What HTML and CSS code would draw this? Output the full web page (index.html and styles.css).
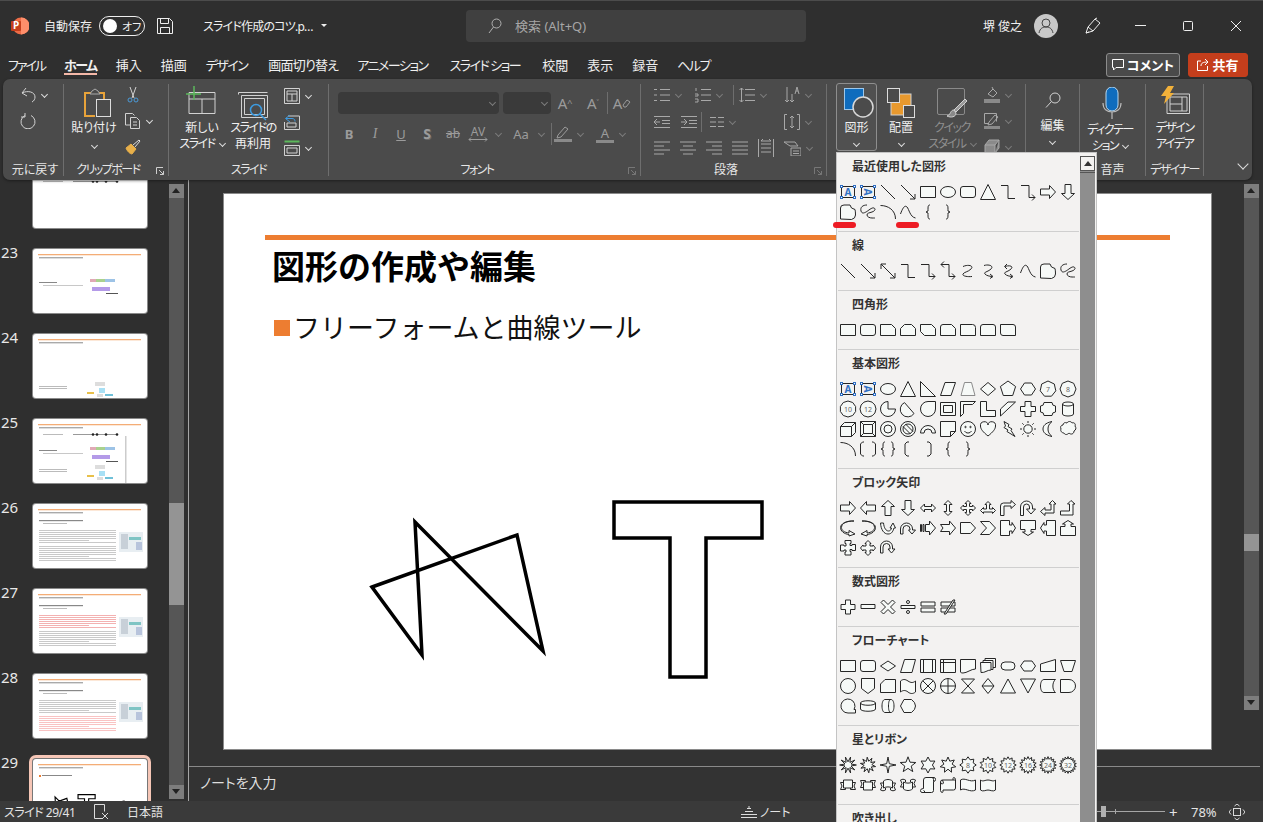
FILE: index.html
```html
<!DOCTYPE html>
<html lang="ja">

<head>
    <meta charset="UTF-8">
    <title>スライド作成のコツ.pptx - PowerPoint</title>
    <link rel="stylesheet" href="styles.css">
</head>

<body>
    <!-- title bar -->
    <header class="titlebar">
        <div class="title-left">
            <svg class="logo" width="18" height="18" viewBox="0 0 18 18"><circle cx="10" cy="9" r="8.5" fill="#ed6c47"/><path d="M10 .5a8.5 8.5 0 0 1 0 17z" fill="#ff8f6b"/><rect x="0" y="4" width="10" height="10" rx="1" fill="#c43e1c"/><text x="5" y="12" class="logo-p">P</text></svg>
            <span class="autosave">自動保存</span>
            <span class="toggle"><i class="knob"></i><b>オフ</b></span>
            <svg class="save" width="16" height="16" viewBox="0 0 16 16"><path d="M.5.5h12l3 3v12H.5zM3.500.5v5h8v-5M3.500 15.500v-6h9v6"/></svg>
            <span class="filename">スライド作成のコツ.p…</span>
            <i class="caret"></i>
        </div>
        <div class="searchbox">
            <svg width="14" height="16" viewBox="0 0 14 16"><circle cx="8.5" cy="5.5" r="4.5"/><path d="M5.500 9L1 15"/></svg>
            <span>検索 (Alt+Q)</span>
        </div>
        <span class="username">堺 俊之</span>
        <svg class="avatar" width="24" height="24" viewBox="0 0 24 24"><circle cx="12" cy="12" r="12" fill="#c8c8c8"/><circle cx="12" cy="9" r="4" fill="none" stroke="#444"/><path d="M5 19c1-5 4-6 7-6s6 1 7 6" fill="none" stroke="#444"/></svg>
        <svg class="penicon" width="18" height="18" viewBox="0 0 18 18"><path d="M2 16l2-6 7-8 5 4-7 8zM4 10l5 4M11 2l2-1M2 16l3-1"/></svg>
        <svg class="win-min" width="11" height="11" viewBox="0 0 11 11"><path d="M0 5.500h11"/></svg>
        <svg class="win-max" width="10" height="10" viewBox="0 0 10 10"><rect x=".5" y=".5" width="9" height="9" rx="1"/></svg>
        <svg class="win-close" width="10" height="10" viewBox="0 0 10 10"><path d="M0 0l10 10M10 0L0 10"/></svg>
    </header>

    <!-- tabs -->
    <nav class="tabs">
        <span class="k2">ファイル</span>
        <span class="active k">ホーム</span>
        <span>挿入</span>
        <span>描画</span>
        <span class="k">デザイン</span>
        <span class="mixed">画面切り替え</span>
        <span class="k">アニメーション</span>
        <span class="k wide">スライド ショー</span>
        <span class="wide">校閲</span>
        <span>表示</span>
        <span>録音</span>
        <span class="k">ヘルプ</span>
        <div class="tab-actions">
            <button class="btn-comment"><svg width="12" height="12" viewBox="0 0 12 12"><path d="M.5.5h11v8H4L1.500 11V8.500H.5z"/></svg>コメント</button>
            <button class="btn-share"><svg width="12" height="13" viewBox="0 0 12 13"><path d="M4 3H.5v9.500h10V8M4 8c0-3 2-4 7-4M8 1l3 3-3 3"/></svg>共有</button>
        </div>
    </nav>

    <!-- ribbon -->
    <section class="ribbon">
        <div class="group g-undo">
            <div class="group-body">
                <div class="col">
                    <div class="row"><svg class="ic" width="16" height="16" viewBox="0 0 16 16"><path d="M6 1L2 6l5 3M2 6c6-3 13-1 13 4 0 2-1 4-3 5"/></svg><i class="chev"></i></div>
                    <div class="row dim"><svg class="ic" width="16" height="16" viewBox="0 0 16 16"><path d="M5 2.500A7 7 0 1 0 11 2.500M5 0v4H1"/></svg></div>
                </div>
            </div>
            <div class="group-label">元に戻す</div>
        </div>

        <div class="group g-clip">
            <div class="group-body">
                <div class="big paste">
                    <div class="big-icon"><svg width="28" height="30" viewBox="0 0 28 30"><path d="M7 5H1v23h10M15 5h5v6" fill="none" stroke="#e8a33a" stroke-width="2"/><path d="M6 6l2-3 3-2 3 2 2 3z" fill="#4b4b4b" stroke="#aaa"/><rect x="12.500" y="11.500" width="14" height="17" fill="#4b4b4b" stroke="#ddd"/></svg></div>
                    <span>貼り付け</span>
                    <i class="chev"></i>
                </div>
                <div class="col">
                    <div class="row"><svg class="ic" width="16" height="16" viewBox="0 0 16 16"><path d="M5 0l4 11M11 0L7 11"/><circle cx="5" cy="13" r="2" stroke="#4a9ad8"/><circle cx="11" cy="13" r="2" stroke="#4a9ad8"/></svg></div>
                    <div class="row"><svg class="ic" width="16" height="16" viewBox="0 0 16 16"><path d="M5 12H.5V.5h7l2 2M5.500 4.500h6l3 3v8h-9zM8 9h4M8 12h4"/></svg><i class="chev"></i></div>
                    <div class="row"><svg class="ic" width="16" height="16" viewBox="0 0 16 16"><path d="M1 9l5-4 5 5-4 5C5 15 2 12 1 9z" fill="#e8b04a" stroke="#e8b04a"/><path d="M8 6l6-5 1 1-5 6" stroke="#ddd"/></svg></div>
                </div>
            </div>
            <div class="group-label"><span class="k">クリップボード</span><svg class="launcher" width="8" height="8" viewBox="0 0 8 8"><path d="M.5 7V.5H7M3 3l4.500 4.500M7.500 4v3.500H4"/></svg></div>
        </div>

        <div class="group g-slide">
            <div class="group-body">
                <div class="big newslide">
                    <div class="big-icon"><svg width="30" height="28" viewBox="0 0 30 28"><path d="M3 6.500h26v21H3zM3 13h26M16 13v14.500"/><path d="M8 0v14M0 8h15" stroke="#5cb85c" stroke-width="1.500"/></svg></div>
                    <span>新しい</span>
                    <span class="k">スライド<i class="chev inline"></i></span>
                </div>
                <div class="big reuse">
                    <div class="big-icon"><svg width="30" height="30" viewBox="0 0 30 30"><path d="M.5 1.500h29M.5 1.500v2M3.500 4.500h26v22h-26zM6.500 7.500h20v16h-20z"/><circle cx="18" cy="19" r="5.500" stroke="#3d9be0" stroke-width="1.500"/><path d="M22 23l6 6" stroke="#3d9be0" stroke-width="1.500"/></svg></div>
                    <span class="k">スライドの</span>
                    <span>再利用</span>
                </div>
                <div class="col slide-tools">
                    <div class="row"><svg class="ic" width="16" height="16" viewBox="0 0 16 16"><path d="M.5.5h15v15H.5zM3 3h10v3H3zM3 6v7h10V6M8 6v7"/></svg><i class="chev"></i></div>
                    <div class="row"><svg class="ic" width="16" height="16" viewBox="0 0 16 16"><path d="M4 2h11.500v13.500H.5V8M3 9h9v4H3z"/><path d="M6 1L1.500 4.500 6 8M2 4.500h6c2 0 3 1 3 3" stroke="#3d9be0"/></svg></div>
                    <div class="row"><svg class="ic" width="16" height="16" viewBox="0 0 16 16"><path d="M.5 1.500h15" stroke="#5cb85c" stroke-width="2"/><path d="M.5 5.500h15v10H.5zM3 8h10v5H3z"/></svg><i class="chev"></i></div>
                </div>
            </div>
            <div class="group-label"><span class="k">スライド</span></div>
        </div>

        <div class="group g-font">
            <div class="group-body stack">
                <div class="font-row1">
                    <div class="combo combo-font"><i class="chev dark"></i></div>
                    <div class="combo combo-size"><i class="chev dark"></i></div>
                    <span class="ftool grow">A<sup>^</sup></span>
                    <span class="ftool shrink">A<sup>˅</sup></span>
                    <i class="vsep"></i>
                    <span class="ftool clear">A<svg width="9" height="9" viewBox="0 0 9 9"><path d="M1 6l4-5 3 2-4 5H2z"/></svg></span>
                </div>
                <div class="font-row2">
                    <span class="ftool"><b>B</b></span>
                    <span class="ftool"><em>I</em></span>
                    <span class="ftool"><u>U</u></span>
                    <span class="ftool"><b class="shadow-s">S</b></span>
                    <span class="ftool"><s>ab</s></span>
                    <span class="ftool drop d43"><span class="spacing">AV<svg width="20" height="5" viewBox="0 0 20 5"><path d="M1 2.500h18M3 .5l-2 2 2 2M17 .5l2 2-2 2"/></svg></span><i class="chev dark"></i></span>
                    <span class="ftool drop d42"><span class="aa">Aa</span><i class="chev dark"></i></span>
                    <i class="vsep"></i>
                    <span class="ftool drop d42 pen"><svg width="18" height="16" viewBox="0 0 18 16"><path d="M4 9l7-8 3 2-7 8-4 1z"/><rect x="0" y="13" width="18" height="3" fill="#8a8a8a" stroke="none"/></svg><i class="chev dark"></i></span>
                    <span class="ftool drop d42 fontcolor"><span class="under">A</span><i class="chev dark"></i></span>
                </div>
            </div>
            <div class="group-label"><span class="k">フォント</span><svg class="launcher dim" width="8" height="8" viewBox="0 0 8 8"><path d="M.5 7V.5H7M3 3l4.500 4.500M7.500 4v3.500H4"/></svg></div>
        </div>

        <div class="group g-para">
            <div class="group-body stack para">
                <div class="para-row">
                    <span class="cell c41"><svg class="ic dimic" width="16" height="16" viewBox="0 0 16 16"><path d="M6 2.500h10M6 8h10M6 13.500h10M0 2.500h3M0 8h3M0 13.500h3" /></svg><i class="chev dark"></i></span>
                    <span class="cell c38"><svg class="ic dimic" width="16" height="16" viewBox="0 0 16 16"><path d="M6 2.500h10M6 8h10M6 13.500h10M1 1v3M0 7h3v2H0M0 12h3v3H0"/></svg><i class="chev dark"></i></span>
                    <i class="vsep tall"></i>
                    <span class="cell c38 ml5"><svg class="ic dimic" width="16" height="16" viewBox="0 0 16 16"><path d="M6 2.500h10M6 8h10M6 13.500h10M2.500 1v14M.5 3l2-2 2 2M.5 13l2 2 2-2"/></svg><i class="chev dark"></i></span>
                    <span class="cell end"><svg class="ic dimic" width="16" height="18" viewBox="0 0 16 18"><path d="M3 1v15M1 14l2 2 2-2M8 8v8M6 14l2 2 2-2M11 8l2-7 2 7M12 5h2"/></svg><i class="chev dark"></i></span>
                </div>
                <div class="para-row second">
                    <span class="cell c26"><svg class="ic dimic" width="16" height="12" viewBox="0 0 16 12"><path d="M0 .5h16M8 4.500h8M8 7.500h8M0 11.500h16M6 6H0M3 3L0 6l3 3"/></svg></span>
                    <span class="cell c21"><svg class="ic dimic" width="16" height="12" viewBox="0 0 16 12"><path d="M0 .5h16M8 4.500h8M8 7.500h8M0 11.500h16M0 6h6M3 3l3 3-3 3"/></svg></span>
                    <i class="vsep tall"></i>
                    <span class="cell c30 ml8"><svg class="ic dimic" width="14" height="10" viewBox="0 0 14 10"><path d="M0 .5h6M8 .5h6M0 5h6M8 5h6M0 9.500h6M8 9.500h6"/></svg><i class="chev dark"></i></span>
                    <span class="cell end"><svg class="ic dimic" width="16" height="16" viewBox="0 0 16 16"><path d="M3 .5H.5v15H3M13 .5h2.500v15H13M8 2v12M6 4l2-2 2 2M6 12l2 2 2-2"/></svg><i class="chev dark"></i></span>
                </div>
                <div class="para-row third">
                    <svg class="ic dimic al" width="16" height="14" viewBox="0 0 16 14"><path d="M0 1h16M0 5h10M0 9h16M0 13h10"/></svg>
                    <svg class="ic dimic al" width="16" height="14" viewBox="0 0 16 14"><path d="M0 1h16M3 5h10M0 9h16M3 13h10"/></svg>
                    <svg class="ic dimic al" width="16" height="14" viewBox="0 0 16 14"><path d="M0 1h16M6 5h10M0 9h16M6 13h10"/></svg>
                    <svg class="ic dimic al" width="16" height="14" viewBox="0 0 16 14"><path d="M0 1h16M0 5h16M0 9h16M0 13h16"/></svg>
                    <svg class="ic dimic al" width="16" height="18" viewBox="0 0 16 18"><path d="M.5 0v18M15.500 0v18M3 5h10M3 9h10M3 13h10M3 2h10M3 2l2-2M13 2l-2-2"/></svg>
                    <span class="cell end"><svg class="ic dimic" width="17" height="15" viewBox="0 0 17 15"><path d="M0 1h11l3 4H6zM7 7h10v8H7zM9 10h6M9 12.500h6"/></svg><i class="chev dark"></i></span>
                </div>
            </div>
            <div class="group-label">段落<svg class="launcher dim" width="8" height="8" viewBox="0 0 8 8"><path d="M.5 7V.5H7M3 3l4.500 4.500M7.500 4v3.500H4"/></svg></div>
        </div>

        <div class="group g-draw">
            <div class="group-body">
                <div class="big shapes-btn">
                    <div class="big-icon"><svg width="30" height="32" viewBox="0 0 30 32"><rect x=".5" y=".5" width="19" height="21" fill="#0f6cbd" stroke="#9cc7ea"/><circle cx="19" cy="19" r="10" fill="#4b4b4b" stroke="#d8d8d8" stroke-width="1.500"/></svg></div>
                    <span>図形</span>
                    <i class="chev"></i>
                </div>
                <div class="big arrange">
                    <div class="big-icon"><svg width="28" height="30" viewBox="0 0 28 30"><rect x="4" y="6" width="20" height="21" fill="#e8992e"/><rect x=".5" y=".5" width="12" height="14" fill="#4b4b4b" stroke="#ddd"/><rect x="16.500" y="17.500" width="11" height="12" fill="#4b4b4b" stroke="#ddd"/></svg></div>
                    <span>配置</span>
                    <i class="chev"></i>
                </div>
                <div class="big quick">
                    <div class="big-icon"><svg width="31" height="31" viewBox="0 0 31 31"><rect x=".5" y=".5" width="27" height="26" rx="1.500" fill="none" stroke="#8a8a8a"/><path d="M30 13L19 24l-2-2 11-11z" fill="#9a9a9a"/><path d="M17 22c-4 0-3 5-7 6 4 2 9 1 9-3z" fill="#8a8a8a"/></svg></div>
                    <span class="k">クイック</span>
                    <span class="k">スタイル<i class="chev inline dark"></i></span>
                </div>
                <div class="col draw-tools">
                    <div class="row"><svg class="ic dimic" width="16" height="16" viewBox="0 0 16 16"><path d="M4 7l5-5 4 4-4 4zM9 2L8 0"/><rect x="0" y="12" width="16" height="4" fill="#8a8a8a" stroke="none"/></svg><i class="chev dark"></i></div>
                    <div class="row"><svg class="ic dimic" width="16" height="16" viewBox="0 0 16 16"><path d="M.5.5h12v8M.5.5v10h4M5 9l6-7 3 2-6 7-4 1z"/><rect x="0" y="13" width="16" height="3" fill="#8a8a8a" stroke="none"/></svg><i class="chev dark"></i></div>
                    <div class="row"><svg class="ic dimic" width="16" height="16" viewBox="0 0 16 16"><path d="M1 6l4-5h10l-4 5zM1 6v8h10V6M11 14l4-5V1" fill="#8a8a8a"/></svg><i class="chev dark"></i></div>
                </div>
            </div>
        </div>

        <div class="group g-edit">
            <div class="group-body">
                <div class="big edit">
                    <div class="big-icon"><svg class="ic" width="16" height="16" viewBox="0 0 16 16"><circle cx="10" cy="6" r="5"/><path d="M6.500 9.500L1 15.500"/></svg></div>
                    <span>編集</span>
                    <i class="chev"></i>
                </div>
            </div>
        </div>

        <div class="group g-voice">
            <div class="group-body">
                <div class="big dictate">
                    <div class="big-icon"><svg width="20" height="32" viewBox="0 0 20 32"><rect x="4" y="0" width="12" height="24" rx="6" fill="#0f6cbd" stroke="#b8d8f0"/><path d="M1 16c0 6 4 9 9 9s9-3 9-9M10 25v7" fill="none" stroke="#bbb" stroke-width="1.200"/></svg></div>
                    <span class="k">ディクテー</span>
                    <span class="k">ション<i class="chev inline"></i></span>
                </div>
            </div>
            <div class="group-label">音声</div>
        </div>

        <div class="group g-design">
            <div class="group-body">
                <div class="big designer">
                    <div class="big-icon"><svg width="30" height="28" viewBox="0 0 30 28"><path d="M7 8h22.500v19.500H7zM10 11h17v14H10zM22 11v14M10 18h12"/><path d="M8 0h6l-4 7h4L4 18l2-8H1z" fill="#f2b13a" stroke="none"/></svg></div>
                    <span class="k">デザイン</span>
                    <span class="k">アイデア</span>
                </div>
            </div>
            <div class="group-label"><span class="k">デザイナー</span></div>
        </div>

        <div class="collapse"><i class="chev big-chev"></i></div>
    </section>

    <!-- workspace -->
    <main class="workspace">
        <aside class="slide-panel" id="slide-panel"></aside>
        <div class="scrollbar panel-scroll">
            <i class="sb-btn up"></i>
            <i class="sb-thumb"></i>
            <i class="sb-btn down"></i>
        </div>
        <div class="splitter"></div>
        <div class="editor">
            <div class="stage">
                <div class="slide">
                    <div class="slide-rule"></div>
                    <h1 class="slide-title">図形の作成や編集</h1>
                    <p class="slide-bullet"><i class="bullet"></i>フリーフォームと曲線ツール</p>
                    <svg class="slide-shapes" width="987" height="555" viewBox="0 0 987 555">
                        <path d="M148 393L293 341L319 457L191 328L198 461z"/>
                        <path d="M390 308H538V344H482V483H446V344H390z"/>
                    </svg>
                </div>
                <div class="scrollbar main-scroll">
                    <i class="sb-btn up"></i>
                    <i class="sb-thumb"></i>
                    <i class="sb-btn down"></i>
                </div>
            </div>
            <div class="notes">ノートを入力</div>
        </div>
    </main>

    <!-- status bar -->
    <footer class="statusbar">
        <div class="status-left">
            <span class="slide-count">スライド 29/41</span>
            <svg width="15" height="15" viewBox="0 0 15 15"><path d="M9 14.500H.5V.5h10v7M8 9l6 6M14 9l-6 6"/></svg>
            <span>日本語</span>
        </div>
        <div class="status-notes">
            <svg width="16" height="12" viewBox="0 0 16 12"><path d="M0 8.500h16M0 11.500h16M4 5.500h8M6 2.500h4M8 0v2"/></svg>
            <span>ノート</span>
        </div>
        <div class="status-zoom">
            <div class="zoom-slider"><i class="zoom-thumb"></i><i class="zoom-tick"></i></div>
            <span class="zoom-plus">+</span>
            <span class="zoom-val">78%</span>
            <svg width="16" height="16" viewBox="0 0 16 16"><rect x="4.500" y="4.500" width="7" height="7"/><path d="M5.500 2L8 0l2.500 2M5.500 14L8 16l2.500-2M2 5.500L0 8l2 2.500M14 5.500L16 8l-2 2.500"/></svg>
        </div>
    </footer>

    <!-- shapes dropdown -->
    <div class="shapes-menu">
        <div class="shapes-list" id="shapes-list"></div>
        <div class="menu-scroll">
            <i class="menu-up"></i>
            <i class="menu-thumb"></i>
        </div>
    </div>
    <i class="red-mark mark-a"></i>
    <i class="red-mark mark-b"></i>

    <script src="app.js"></script>
</body>

</html>
```

FILE: styles.css
```css
* {
    margin: 0;
    padding: 0;
    box-sizing: border-box;
}

html,
body {
    width: 1263px;
    height: 822px;
    overflow: hidden;
}

body {
    position: relative;
    background: #2f2f2f;
    color: #f0f0f0;
    font-family: "Noto Sans", "Noto Sans CJK JP", sans-serif;
    font-size: 12px;
    font-feature-settings: "palt";
    border-top: 1px solid #4c4c4c;
}

svg {
    flex: none;
    display: block;
}

i {
    display: block;
    font-style: normal;
}

/* katakana runs narrow in the ribbon */
.k {
    letter-spacing: -1.5px;
}

.k2 {
    letter-spacing: -2px;
}

/* title bar */
.titlebar {
    height: 49px;
    display: flex;
    align-items: center;
}

.title-left {
    width: 466px;
    display: flex;
    align-items: center;
    padding-left: 11px;
}

.logo-p {
    fill: #fff;
    font-size: 10px;
    font-weight: 700;
    text-anchor: middle;
}

.autosave {
    margin-left: 15px;
    width: 48px;
    white-space: nowrap;
}

.toggle {
    margin-left: 7px;
    width: 46px;
    height: 20px;
    border: 1px solid #eee;
    border-radius: 10px;
    display: flex;
    align-items: center;
    padding-left: 3px;
    font-size: 11px;
}

.toggle b {
    font-weight: 400;
    margin-left: 5px;
}

.knob {
    width: 14px;
    height: 14px;
    border-radius: 50%;
    background: #fff;
}

.save {
    margin-left: 12px;
    fill: none;
    stroke: #eee;
}

.filename {
    margin-left: 30px;
    width: 108px;
    white-space: nowrap;
    letter-spacing: -0.8px;
}

.caret {
    margin-left: 10px;
    border-left: 3px solid transparent;
    border-right: 3px solid transparent;
    border-top: 3px solid #eee;
}

.searchbox {
    width: 340px;
    height: 32px;
    background: #404040;
    border-radius: 4px;
    display: flex;
    align-items: center;
    padding-left: 22px;
    gap: 13px;
    color: #a6a6a6;
    font-size: 13px;
}

.searchbox svg {
    fill: none;
    stroke: #b0b0b0;
}

.username {
    margin-left: 177px;
    width: 39px;
    white-space: nowrap;
}

.avatar {
    margin-left: 12px;
}

.penicon,
.win-min,
.win-max,
.win-close {
    fill: none;
    stroke: #eee;
}

.penicon {
    margin-left: 26px;
}

.win-min {
    margin-left: 33px;
}

.win-max {
    margin-left: 37px;
}

.win-close {
    margin-left: 38px;
}

/* tabs */
.tabs {
    height: 29px;
    display: flex;
    align-items: center;
    padding-left: 8px;
    gap: 19px;
    font-size: 13px;
    white-space: nowrap;
}

.tabs .mixed {
    letter-spacing: -0.8px;
    margin-left: 2px;
}

.tabs .wide {
    margin-left: 3px;
}

.tabs .active {
    font-weight: 700;
    position: relative;
}

.tabs .active::after {
    content: "";
    position: absolute;
    left: 0;
    right: 0;
    bottom: -1px;
    height: 2px;
    background: #f4b8a8;
}

.tab-actions {
    margin-left: auto;
    padding-right: 15px;
    display: flex;
    gap: 8px;
}

.tab-actions button {
    height: 24px;
    border-radius: 3px;
    color: #fff;
    font: 700 13px "Noto Sans", "Noto Sans CJK JP", sans-serif;
    font-feature-settings: "palt";
    display: flex;
    align-items: center;
    justify-content: center;
    gap: 3px;
}

.tab-actions svg {
    fill: none;
    stroke: #fff;
}

.btn-comment {
    width: 74px;
    background: #4a4a4a;
    border: 1px solid #8c8c8c;
}

.btn-share {
    width: 60px;
    background: #c43e1c;
    border: 1px solid #c43e1c;
}

/* ribbon */
.ribbon {
    position: relative;
    z-index: 2;
    width: 1249px;
    height: 101px;
    margin-left: 3px;
    padding-top: 5px;
    background: #4b4b4b;
    border-radius: 7px;
    display: flex;
    align-items: flex-start;
    box-shadow: 0 1px 3px rgba(0, 0, 0, 0.4);
}

.group {
    height: 92px;
    border-right: 1px solid #6e6e6e;
    display: flex;
    flex-direction: column;
    flex: none;
}

.group-body {
    height: 80px;
    display: flex;
    align-items: flex-start;
}

.group-body.stack {
    flex-direction: column;
}

.group-label {
    position: relative;
    height: 12px;
    line-height: 12px;
    text-align: center;
    color: #e6e6e6;
    white-space: nowrap;
}

.launcher {
    position: absolute;
    right: 4px;
    top: 3px;
    fill: none;
    stroke: #cfcfcf;
}

.launcher.dim {
    stroke: #777;
}

.g-undo {
    width: 61px;
}

.g-undo .group-label {
    padding-left: 4px;
}

.g-clip {
    width: 105px;
}

.g-clip .group-label {
    padding-right: 16px;
}

.g-slide {
    width: 160px;
}

.g-font {
    width: 312px;
}

.g-font .group-label,
.g-para .group-label {
    padding-right: 15px;
}

.g-para {
    width: 186px;
}

.g-draw {
    width: 199px;
}

.g-edit {
    width: 54px;
}

.g-voice {
    width: 66px;
}

.g-design {
    width: 58px;
}

.col {
    display: flex;
    flex-direction: column;
    gap: 10px;
    padding-top: 3px;
}

.row {
    height: 16px;
    display: flex;
    align-items: center;
}

.ic {
    fill: none;
    stroke: #d2d2d2;
}

.ic.dimic {
    stroke: #a8a8a8;
}

.chev {
    flex: none;
    width: 5px;
    height: 5px;
    margin: -2px 0 0 6px;
    border-right: 1.5px solid #dcdcdc;
    border-bottom: 1.5px solid #dcdcdc;
    transform: rotate(45deg);
}

.chev.dark {
    border-color: #7c7c7c;
}

.chev.inline {
    display: inline-block;
    vertical-align: middle;
    margin-left: 5px;
}

.big {
    display: flex;
    flex-direction: column;
    align-items: center;
    padding-top: 2px;
    line-height: 16px;
    white-space: nowrap;
}

.big > .chev {
    margin: 5px 0 0;
}

.big-icon {
    height: 34px;
    display: flex;
    justify-content: center;
}

.big-icon svg {
    fill: none;
    stroke: #d2d2d2;
}

.g-undo .col {
    padding-left: 17px;
}

.paste {
    width: 60px;
    margin-right: 1px;
    padding-top: 4px;
}

.paste .big-icon {
    height: 32px;
    margin-left: 8px;
}

.paste > .chev {
    margin-top: 7px;
}

.newslide {
    width: 66px;
}

.newslide .big-icon {
    margin-left: -2px;
}

.reuse {
    width: 50px;
    margin-left: -7px;
}

.reuse .big-icon {
    padding-top: 5px;
}

.slide-tools {
    margin-left: 6px;
    padding-top: 4px;
}

/* font group */
.font-row1 {
    display: flex;
    align-items: center;
    padding: 8px 0 0 9px;
    height: 30px;
}

.font-row2 {
    display: flex;
    align-items: center;
    padding-left: 7px;
    margin-top: 12px;
    height: 16px;
}

.combo {
    height: 22px;
    background: #3a3a3a;
    border-radius: 4px;
    display: flex;
    align-items: center;
    justify-content: flex-end;
    padding-right: 4px;
}

.combo-font {
    width: 161px;
    margin-right: 4px;
}

.combo-size {
    width: 48px;
}

.ftool {
    width: 26px;
    height: 16px;
    display: flex;
    align-items: center;
    justify-content: center;
    color: #9b9b9b;
    font-size: 13px;
    line-height: 16px;
}

.ftool svg {
    fill: none;
    stroke: #9b9b9b;
}

.ftool em {
    font-family: "Liberation Serif", serif;
    font-size: 14px;
}

.ftool s {
    font-size: 12px;
}

.font-row1 .ftool {
    width: 28px;
    font-size: 15px;
}

.font-row1 sup {
    font-size: 9px;
    line-height: 0;
}

.shadow-s {
    text-shadow: 1px 1px 0 #666;
    font-size: 14px;
}

.drop {
    justify-content: flex-start;
}

.drop.d43 {
    width: 43px;
}

.drop.d42 {
    width: 42px;
}

.spacing,
.aa {
    width: 24px;
    text-align: center;
}

.spacing {
    display: flex;
    flex-direction: column;
    align-items: center;
    line-height: 11px;
    font-size: 12px;
}

.pen {
    padding-left: 2px;
}

.fontcolor {
    width: 42px;
}

.under {
    width: 18px;
    text-align: center;
    border-bottom: 3px solid #8a8a8a;
    line-height: 14px;
    margin-left: 2px;
}

.vsep {
    flex: none;
    width: 1px;
    height: 22px;
    background: #6e6e6e;
}

.vsep.tall {
    height: 20px;
}

/* paragraph group */
.para-row {
    display: flex;
    align-items: center;
    width: 185px;
    height: 16px;
    padding-left: 13px;
}

.para-row:first-child {
    margin-top: 3px;
}

.para-row.second {
    margin-top: 11px;
}

.para-row.third {
    margin-top: 10px;
}

.cell {
    display: flex;
    align-items: center;
    flex: none;
}

.cell.c41 {
    width: 41px;
}

.cell.c38 {
    width: 38px;
}

.cell.c26 {
    width: 27px;
}

.cell.c21 {
    width: 20px;
}

.cell.c30 {
    width: 30px;
}

.ml5 {
    margin-left: 5px;
}

.ml8 {
    margin-left: 8px;
}

.cell.end {
    margin-left: auto;
    width: 42px;
}

.al {
    margin-right: 10px;
}

/* drawing group */
.shapes-btn {
    width: 41px;
    height: 68px;
    margin: -1px 0 0 9px;
    background: #505050;
    border: 1px solid #8e8e8e;
    border-radius: 3px;
    padding-top: 4px;
}

.shapes-btn .big-icon {
    height: 32px;
    margin-left: 4px;
}

.arrange {
    width: 44px;
    margin-left: 2px;
    padding-top: 4px;
}

.arrange .big-icon {
    height: 32px;
}

.quick {
    width: 52px;
    margin-left: 3px;
    color: #8f8f8f;
    padding-top: 4px;
}

.quick .big-icon {
    height: 32px;
}

.draw-tools {
    margin-left: 6px;
}

.edit {
    width: 53px;
    padding-top: 8px;
}

.edit .big-icon {
    height: 26px;
}

.dictate {
    width: 60px;
    padding-top: 3px;
}

.dictate .big-icon {
    height: 35px;
    margin-left: 3px;
}

.designer {
    width: 57px;
}

.collapse {
    margin: 78px 0 0 29px;
}

.big-chev {
    width: 8px;
    height: 8px;
}

/* workspace */
.workspace {
    position: absolute;
    top: 179px;
    left: 0;
    width: 1263px;
    height: 621px;
    display: flex;
}

.slide-panel {
    width: 169px;
    height: 621px;
    overflow: hidden;
    display: flex;
    flex-direction: column;
    gap: 21px;
}

.thumb-row {
    display: flex;
    flex: none;
    height: 64px;
}

.thumb-no {
    width: 33px;
    font-size: 15px;
    line-height: 12px;
    margin-top: -3px;
    height: 12px;
    padding-left: 1px;
    color: #e8e8e8;
    font-family: "Noto Sans", sans-serif;
}

.thumb {
    width: 114px;
    height: 64px;
    background: #fff;
    border-radius: 3px;
    box-shadow: 0 0 0 1px #8a8a8a;
    overflow: hidden;
}

.thumb svg {
    filter: blur(0.35px);
}

.thumb-row.first {
    height: 48px;
}

.thumb-row.first .thumb {
    height: 48px;
    border-radius: 0 0 3px 3px;
}

.thumb-row.current .thumb {
    box-shadow: 0 0 0 1px #777, 0 0 0 4px #f6c6b6;
}

.scrollbar {
    width: 15px;
    flex: none;
    display: flex;
    flex-direction: column;
    background: #565656;
}

.panel-scroll {
    height: 615px;
    margin-top: 4px;
}

.sb-btn {
    height: 14px;
    flex: none;
    background: #7d7d7d;
    position: relative;
}

.sb-btn::after {
    content: "";
    position: absolute;
    left: 3px;
    top: 4px;
    border-left: 4px solid transparent;
    border-right: 4px solid transparent;
}

.sb-btn.up::after {
    border-bottom: 5px solid #222;
}

.sb-btn.down {
    margin-top: auto;
}

.sb-btn.down::after {
    border-top: 5px solid #222;
}

.sb-thumb {
    background: #949494;
}

.panel-scroll .sb-thumb {
    margin-top: 305px;
    height: 102px;
}

.main-scroll .sb-thumb {
    margin-top: 336px;
    height: 17px;
}

.splitter {
    width: 1px;
    margin-left: 4px;
    background: #a6a6a6;
    flex: none;
}

.editor {
    width: 1074px;
    display: flex;
    flex-direction: column;
    background: #333;
}

.stage {
    height: 586px;
    display: flex;
    align-items: flex-start;
    padding-left: 35px;
}

.slide {
    position: relative;
    width: 987px;
    height: 555px;
    margin-top: 14px;
    background: #fff;
    color: #000;
    outline: 1px solid #8a8a8a;
    padding: 41px 41px 0 41px;
}

.slide-rule {
    height: 5px;
    background: #ed7d31;
}

.slide-title {
    margin: 4px 0 0 7px;
    font-size: 33px;
    line-height: 46px;
    font-weight: 700;
    font-feature-settings: normal;
    white-space: nowrap;
}

.slide-bullet {
    display: flex;
    align-items: center;
    margin: 18px 0 0 9px;
    font-size: 27px;
    line-height: 40px;
    font-feature-settings: normal;
    color: #111;
}

.bullet {
    width: 16px;
    height: 16px;
    background: #ed7d31;
    margin-right: 3px;
}

.slide-shapes {
    position: absolute;
    left: 0;
    top: 0;
    fill: none;
    stroke: #000;
    stroke-width: 3.5;
}

.main-scroll {
    height: 526px;
    margin: 4px 0 0 33px;
}

.notes {
    height: 35px;
    border-top: 1px solid #8a8a8a;
    margin-right: 3px;
    padding: 6px 0 0 11px;
    font-size: 14px;
    line-height: 20px;
    color: #dedede;
}

/* status bar */
.statusbar {
    position: absolute;
    left: 0;
    top: 800px;
    width: 1263px;
    height: 21px;
    background: #3a3a3a;
    display: flex;
    align-items: center;
    color: #e4e4e4;
    white-space: nowrap;
}

.statusbar svg {
    fill: none;
    stroke: #dcdcdc;
}

.status-left {
    width: 741px;
    display: flex;
    align-items: center;
    padding-left: 4px;
}

.slide-count {
    width: 70px;
    letter-spacing: -0.5px;
}

.status-left svg {
    margin: 0 18px 0 20px;
}

.status-notes {
    display: flex;
    align-items: center;
    gap: 3px;
}

.status-zoom {
    margin-left: auto;
    padding-right: 18px;
    display: flex;
    align-items: center;
}

.zoom-slider {
    position: relative;
    width: 68px;
    height: 1px;
    background: #a6a6a6;
}

.zoom-thumb {
    position: absolute;
    left: 4px;
    top: -5px;
    width: 5px;
    height: 11px;
    background: #b0b0b0;
}

.zoom-tick {
    position: absolute;
    left: 18px;
    top: -2px;
    width: 1px;
    height: 5px;
    background: #a6a6a6;
}

.zoom-plus {
    margin-left: 4px;
    width: 14px;
    font-size: 15px;
}

.zoom-val {
    margin-left: 8px;
    width: 38px;
    font-size: 13px;
}

/* shapes dropdown */
.shapes-menu {
    position: absolute;
    z-index: 5;
    left: 836px;
    top: 151px;
    width: 261px;
    height: 670px;
    background: #f3f2f1;
    border: 1px solid #c4c4c4;
    border-bottom: none;
    color: #262626;
    display: flex;
    overflow: hidden;
}

.shapes-list {
    width: 243px;
    flex: none;
}

.shape-section {
    padding: 4px 0 11px;
    border-top: 1px solid #cfcfcf;
    margin: 0 1px;
}

.shape-section:first-child {
    border-top: none;
}

.shape-section h4 {
    height: 20px;
    line-height: 20px;
    padding-left: 14px;
    margin-bottom: 7px;
    font-size: 12px;
    font-weight: 700;
    color: #333;
}

.shape-grid {
    display: flex;
    flex-wrap: wrap;
    gap: 4px;
    padding-left: 2px;
}

.shape {
    width: 16px;
    height: 16px;
    overflow: visible;
}

.shape * {
    fill: #f6f9f7;
    stroke: #262626;
    stroke-width: 1;
}

.shape .n {
    fill: none;
}

.shape .gray {
    stroke: #8c8c8c;
}

.shape .handle {
    fill: #fff;
    stroke: #2f6fc4;
}

.shape text {
    fill: #666;
    stroke: none;
    font-size: 7px;
    font-family: "Noto Sans", sans-serif;
    text-anchor: middle;
    dominant-baseline: central;
}

.shape text.bluetext {
    fill: #2f6fc4;
    font-size: 10px;
    font-weight: 700;
}

.menu-scroll {
    margin-left: auto;
    width: 16px;
    background: #8e8e8e;
    display: flex;
    flex-direction: column;
    margin-top: 3px;
    margin-right: 1px;
}

.menu-up {
    height: 15px;
    background: #f3f2f1;
    border: 1px solid #555;
    position: relative;
}

.menu-up::after {
    content: "";
    position: absolute;
    left: 3px;
    top: 4px;
    border-left: 4px solid transparent;
    border-right: 4px solid transparent;
    border-bottom: 5px solid #333;
}

.menu-thumb {
    flex: 1;
    margin-top: 1px;
    background: #8e8e8e;
    border-top: 1px solid #555;
}

.red-mark {
    position: absolute;
    z-index: 6;
    top: 221px;
    height: 6px;
    background: #ed1c24;
    border-radius: 3px;
}

.mark-a {
    left: 833px;
    width: 23px;
}

.mark-b {
    left: 896px;
    width: 23px;
}
```

FILE: app.js
```js
// shape palette and slide thumbnails

const p = (d, cls) => `<path d="${d}"${cls ? ` class="${cls}"` : ''}/>`;
const n = (d) => p(d, 'n');
const c = (x, y, r, cls) => `<circle cx="${x}" cy="${y}" r="${r}"${cls ? ` class="${cls}"` : ''}/>`;
const label = (s) => `<text x="8" y="8">${s}</text>`;
const g = (tr, inner) => `<g transform="${tr}">${inner}</g>`;
const rot = (deg, inner) => g(`rotate(${deg} 8 8)`, inner);
const flipX = (inner) => g('translate(16 0) scale(-1 1)', inner);
const flipY = (inner) => g('translate(0 16) scale(1 -1)', inner);

function star(count, R, r, start = -90) {
    const pts = [];
    for (let i = 0; i < count * 2; i++) {
        const a = (start + i * 180 / count) * Math.PI / 180;
        const rad = i % 2 ? r : R;
        pts.push((8 + rad * Math.cos(a)).toFixed(1) + ' ' + (8 + rad * Math.sin(a)).toFixed(1));
    }
    return 'M' + pts.join('L') + 'z';
}

function ngon(count, R = 7.5) {
    const pts = [];
    for (let i = 0; i < count; i++) {
        const a = (-90 + i * 360 / count) * Math.PI / 180;
        pts.push((8 + R * Math.cos(a)).toFixed(1) + ' ' + (8 + R * Math.sin(a)).toFixed(1));
    }
    return 'M' + pts.join('L') + 'z';
}

const handles = [[1.5, 2.5], [14.5, 2.5], [1.5, 13.5], [14.5, 13.5]]
    .map(([x, y]) => `<rect class="handle" x="${x - 1}" y="${y - 1}" width="2" height="2"/>`).join('');

const R_ARROW = p('M.5 5h9V1.500L15.500 8l-6 6.500V11H.5z');
const CALLOUT_R = p('M.5.5h9V5H12V2.500L15.500 8 12 13.500V11H9.500v4.500H.5z');
const CURVED = p('M14 1C7 1 1.500 3 1.500 7.500c0 3 3 5 7.500 5.500v-2.500L15 14l-6 2v-1.500C4 14 .5 11 .5 7.500.5 4 6 .5 14 1z');
const RIBBON = p('M3.500 5.500h-3L2 9 .5 12.500h5V11') + p('M12.500 5.500h3L14 9l1.500 3.500h-5V11') + p('M3.500 3h9v8h-9z');
const CURVED_RIBBON = p('M3.500 6h-3L2 9.500.5 13c2 1 3 1 5 0v-2') + p('M12.500 6h3L14 9.500l1.500 3.500c-2 1-3 1-5 0v-2') + p('M3.500 4C6 2 10 2 12.500 4v7C10 9.500 6 9.500 3.500 11z');
const FREEFORM = p('M.5 15V4Q.5 1 4 1h6l1.500 3 3.500 1.500q.5 2 .5 5.500t-4 4.500z');
const SCRIBBLE = n('M7 1C3 1 0 3 1 7c1 3 3 2 5 1s6-5 8-4 1 3-2 4-5 1-5 3 3 3 5 3 3 0 3 0');

const S = {
    textH: p('M1.500 2.500h13v11h-13z', 'n') + `<text x="8" y="8" class="bluetext">A</text>` + handles,
    textV: p('M1.500 2.500h13v11h-13z', 'n') + `<text x="8" y="8" class="bluetext" transform="rotate(90 8 8)">A</text>` + handles,
    line: n('M1 1l14 14'),
    arrowLine: n('M1 1l14 14M15 15v-5M15 15h-5'),
    dblLine: n('M1 1l14 14M15 15v-5M15 15h-5M1 1v5M1 1h5'),
    rect: p('M.5 2.500h15v11H.5z'),
    oval: p('M.5 8a7.500 5.500 0 1 0 15 0a7.500 5.500 0 1 0-15 0z'),
    round: p('M3 2.500h10a2.500 2.500 0 0 1 2.500 2.500v6a2.500 2.500 0 0 1-2.500 2.500H3A2.500 2.500 0 0 1 .5 11V5A2.500 2.500 0 0 1 3 2.500z'),
    tri: p('M8 .5l7.500 15H.5z'),
    elbow: n('M1 1.500h7v13h7'),
    elbowArrow: n('M1 1.500h8v12h6M12 10.500l3 3-3 3'),
    elbowDbl: n('M1 1.500h8v12h6M12 10.500l3 3-3 3M4 -1.500L1 1.500l3 3'),
    curveConn: n('M3 3.500C9 1 14 3 11 6S4 9 3 11s4 3 9 2.500'),
    curveConnArrow: n('M4 2.500C9 1 14 3 11 6S3 9 5 11s4 2 7 2.500M10 11l3 2.500-3 2'),
    curveConnDbl: n('M5 3.500C9 2 14 3 11 6S3 9 5 11s4 2 7 2.500M10 11l3 2.500-3 2M7 1L4.500 3.500 7 6'),
    rArrow: R_ARROW,
    dArrow: rot(90, R_ARROW),
    lArrow: rot(180, R_ARROW),
    uArrow: rot(-90, R_ARROW),
    freeform: FREEFORM,
    scribble: SCRIBBLE,
    arc: n('M.5 1.500C8 1.500 15.500 6 15.500 15'),
    curve: n('M.5 10C3 3 5 1 7 3s3 10 8.500 11'),
    lbrace: n('M10 1C8 1 8 2 8 7L6 8l2 1c0 5 0 6 2 6'),
    rbrace: n('M6 1c2 0 2 1 2 6l2 1-2 1c0 5 0 6-2 6'),
    lbracket: n('M9 1H7L5 3v10l2 2h2'),
    rbracket: n('M7 1h2l2 2v10l-2 2H7'),
    bracketPair: n('M4 1H2.500L.5 3v10l2 2H4M12 1h1.500l2 2v10l-2 2H12'),
    bracePair: n('M5 1C3 1 3 2 3 7L1 8l2 1c0 5 0 6 2 6M11 1c2 0 2 1 2 6l2 1-2 1c0 5 0 6-2 6'),
    snip1: p('M.5 2.500h11l4 4v7H.5z'),
    snip2: p('M4.500 2.500h7l4 4v7H.5v-7z'),
    snipDiag: p('M.5 2.500h11l4 4v7h-11l-4-4z'),
    snipRound: p('M3 2.500h8.500l4 4v7H.5V5A2.500 2.500 0 0 1 3 2.500z'),
    round1: p('M.5 2.500h12a3 3 0 0 1 3 3v8H.5z'),
    round2: p('M3 2.500h10A2.500 2.500 0 0 1 15.500 5v8.500H.5V5A2.500 2.500 0 0 1 3 2.500z'),
    roundDiag: p('M.5 2.500H13A2.500 2.500 0 0 1 15.500 5v8.500H3A2.500 2.500 0 0 1 .5 11z'),
    rtri: p('M.5.5l15 15H.5z'),
    para: p('M5 1.500h10.500L11 14.500H.5z'),
    trap: p('M4.500 1.500h7L15 14.500H1z', 'gray'),
    diamond: p('M8 1.500L15.500 8 8 14.500.5 8z'),
    pentagon: p(ngon(5, 8)),
    hexagon: p('M4.500 2h7l4 6-4 6h-7l-4-6z'),
    hept: p(ngon(7, 8)) + label('7'),
    oct: p(ngon(8, 8)) + label('8'),
    dec: p(ngon(10, 8)) + label('10'),
    dodec: p(ngon(12, 8)) + label('12'),
    pie: p('M8 .5A7.500 7.500 0 1 0 15.500 8H8z'),
    chord: p('M4.500 1.600L14 12.500A7.500 7.500 0 1 1 4.500 1.600z'),
    teardrop: p('M15.500.5V8A7.500 7.500 0 1 1 8 .5z'),
    frame: p('M.5 1.500h15v13H.5z') + p('M3.500 4.500h9v7h-9z'),
    halfFrame: p('M.5.5h15l-3 3H3.500v9l-3 3z'),
    ell: p('M.5.5h6v9h9v6H.5z'),
    diag: p('M.5 15V8L8 1h7.500z'),
    plus: p('M5 .5h6v5h4.500v5H11v5H5v-5H.5v-5H5z'),
    plaque: p('M4 1.500h8A3.500 3.500 0 0 0 15.500 5v6a3.500 3.500 0 0 0-3.500 3.500H4A3.500 3.500 0 0 0 .5 11V5A3.500 3.500 0 0 0 4 1.500z'),
    can: p('M2.500 3a5.500 2 0 0 1 11 0v10a5.500 2 0 0 1-11 0z') + n('M2.500 3a5.500 2 0 0 0 11 0'),
    cube: p('M.5 5.500l4-4h11v10l-4 4H.5z') + n('M.5 5.500h11v10M11.500 5.500l4-4'),
    bevel: p('M.5.5h15v15H.5z') + p('M3.500 3.500h9v9h-9z') + n('M.5.5l3 3M15.500.5l-3 3M.5 15.500l3-3M15.500 15.500l-3-3'),
    donut: c(8, 8, 7.5) + c(8, 8, 4),
    noSym: c(8, 8, 7.5) + c(8, 8, 5) + n('M3 5.500l7.500 7.500M5.500 3L13 10.500'),
    blockArc: p('M.5 12a7.500 7.500 0 0 1 15 0H12a4 4 0 0 0-8 0z'),
    folded: p('M.5.5h15v10l-5 5H.5z') + n('M15.500 10.500h-5v5'),
    smiley: c(8, 8, 7.5) + c(5.5, 6, .7) + c(10.5, 6, .7) + n('M4.500 10a4 4 0 0 0 7 0'),
    heart: p('M8 15C3 11 .5 8 .5 5A3.700 3.700 0 0 1 8 4a3.700 3.700 0 0 1 7.500 1C15.500 8 13 11 8 15z'),
    bolt: p('M4 .5l5 3-1 2 4 2.500-1 1.500 4 6-8-5 1-1.500-4-2.500L5.500 5z'),
    sun: c(8, 8, 4.2) + n('M8 0v2M8 14v2M0 8h2M14 8h2M2.300 2.300l1.400 1.400M12.300 12.300l1.400 1.400M2.300 13.700l1.400-1.400M12.300 3.700l1.400-1.400'),
    moon: p('M12 .5C5 2 3 5 3 8s2 6 9 7.500C9 13 8 11 8 8s1-5 4-7.500z'),
    cloud: p('M3 4c0-2 2-3 4-2 1-2 4-2 5 0 2-1 4 1 3 3 1.500 2 1 4-1 5 0 3-3 4-5 2-2 2-4 2-5 0-2 0-4-2-3-4-1-2 0-4 2-4z'),
    lrArrow: p('M.5 8l4-4v2.500h7V4l4 4-4 4V9.500h-7V12z'),
    quad: p('M8 .5l3 3H9.500v3h3V5l3 3-3 3V9.500h-3v3H11l-3 3-3-3h1.500v-3h-3V11l-3-3 3-3v1.500h3v-3H5z'),
    lru: p('M8 1.500l3 3H9.500V9h3V7.500l3 3-3 3V12h-9v1.500l-3-3 3-3V9h3V4.500H5z'),
    bent: p('M.5 15.500V6q0-3 3-3H11V.5l4.500 4-4.500 4V6H4v9.500z'),
    uturn: p('M.5 15.500V7a6 6 0 0 1 12 0v2h3L11 14 6.500 9h3V7a3 3 0 0 0-6 0v8.500z'),
    leftUp: p('M.5 11.500L5 7.500V10h6V4H9L12.500.5 16 4h-2v9H5v2.500z'),
    bentUp: p('M.5 11h9V4h-2L11 .5 15 4h-2v11H.5z'),
    curvedR: CURVED,
    curvedL: flipX(CURVED),
    curvedU: p('M.5 3C1 10 4 14 8 14s5-3 6-6h1.500L13 3l-3 5h1.500C11 10 10 11 8.500 11 6 11 4 8 3.500 3z'),
    curvedD: p('M.5 14V9a6 6 0 0 1 12 0v1h3L12 14l-3.500-4h1.500V9a3.500 3.500 0 0 0-7 0v5z'),
    striped: p('M.5 4.500h1v7h-1z') + p('M3 4.500h1v7H3z') + p('M5.500 4.500h4V1l6 7-6 7v-3.500h-4z'),
    notched: p('M.5 4.500h9V1l6 7-6 7v-3.500h-9L3 8z'),
    home: p('M.5 2.500h10L15.500 8l-5 5.500H.5z'),
    chevron: p('M.5 1.500h9L15.500 8l-6 6.500h-9L6.500 8z'),
    calloutR: CALLOUT_R,
    calloutD: rot(90, CALLOUT_R),
    calloutL: flipX(CALLOUT_R),
    calloutU: rot(-90, CALLOUT_R),
    fatCross: p('M5 .5h6v3h-1v2h2v-1h3.500v6H12v-1h-2v2h1v3.500H5V12h1v-2H4v1H.5V5H4v1h2V3.500H5z'),
    quadCall: p('M8 .5l3 3h-1V6h3V5l2.500 3L13 11v-1h-3v2.500h1l-3 3-3-3h1V10H3v1L.5 8 3 5v1h3V3.500H5z'),
    circArrow: p('M.5 13V7a6 6 0 0 1 12 0v2H15l-3.500 4L8 9h2V7a3.500 3.500 0 0 0-7 0v6z'),
    mPlus: p('M5.500 1h5v4.500H15v5h-4.500V15h-5v-4.500H1v-5h4.500z'),
    mMinus: p('M1 5.500h14v4H1z'),
    mTimes: p('M3.500 1L8 5.500 12.500 1 15 3.500 10.500 8 15 12.500 12.500 15 8 10.500 3.500 15 1 12.500 5.500 8 1 3.500z'),
    mDiv: p('M1 6.500h14v3H1z') + c(8, 3, 1.5) + c(8, 13, 1.5),
    mEq: p('M1 3h14v4H1z') + p('M1 9h14v4H1z'),
    mNeq: p('M1 3h14v4H1z') + p('M1 9h14v4H1z') + p('M4 15L13 1h2L6 15z'),
    fDecision: p('M8 3l7.500 5L8 13 .5 8z'),
    fData: p('M4.500 1.500h11L12 14.500H.5z'),
    fPredef: p('M.5 1.500h15v13H.5z') + n('M3.500 1.500v13M12.500 1.500v13'),
    fInternal: p('M.5 1.500h15v13H.5z') + n('M.5 4.500h15M3.500 1.500v13'),
    fDoc: p('M.5 1.500h15V11c-4.500 0-8.500 4-12.500 4-1.500 0-2.500-.5-2.500-1z'),
    fMulti: p('M5 3V.5h10.500v9H13') + p('M3 5V2.500h10v9h-2') + p('M.5 4.500h10.500V12c-4 0-6 3-10 2.500z'),
    fTerm: p('M5 4h6a4 4 0 0 1 0 8H5a4 4 0 0 1 0-8z'),
    fPrep: p('M4 3h8l3.500 5-3.500 5H4L.5 8z'),
    fManual: p('M.5 6l15-4.500v12H.5z'),
    fManOp: p('M.5 2.500h15L12 13.500H4z'),
    fConn: c(8, 8, 7.5),
    fOffpage: p('M1.500.5h13v10L8 15.500l-6.500-5z'),
    fCard: p('M5 1.500h10.500v13H.5V6z'),
    fTape: p('M.5 3C3 1 5 1 8 3s5 2 7.500 0v11c-2.500 2-5 2-7.500 0s-5-2-7.500 0z'),
    fSum: c(8, 8, 7.5) + n('M2.700 2.700l10.600 10.600M13.300 2.700L2.700 13.300'),
    fOr: c(8, 8, 7.5) + n('M8 .5v15M.5 8h15'),
    fCollate: p('M1.500 1h13L1.500 15h13z'),
    fSort: p('M8 .5L14 8l-6 7.500L2 8z') + n('M2 8h12'),
    fExtract: p('M8 1l7.500 14H.5z'),
    fMerge: p('M.5 1h15L8 15z'),
    fStored: p('M4 1.500h11.500C12 4 12 12 15.500 14.500H4C1.500 14.500.5 11 .5 8S1.500 1.500 4 1.500z'),
    fDelay: p('M.5 1.500H9a6.500 6.500 0 0 1 0 13H.5z'),
    fSeq: p('M8 15a7 7 0 1 1 6-3.500h1.500V15z'),
    fDisk: p('M.5 5c0-3 15-3 15 0v6c0 3-15 3-15 0z') + n('M.5 5c0 3 15 3 15 0'),
    fDrum: p('M5 1.500h6c2 0 3 3 3 6.500s-1 6.500-3 6.500H5c-2 0-3-3-3-6.500S3 1.500 5 1.500z') + n('M11 1.500c-2 0-2.500 3-2.500 6.500s.5 6.500 2.500 6.500'),
    fDisplay: p('M4 1.500h7.500q4 3 4 6.500t-4 6.500H4L.5 8z'),
    expl1: p(star(10, 8.4, 3.2, -72)),
    expl2: p(star(10, 7.8, 3.8, -60)),
    star4: p(star(4, 8, 1.8)),
    star5: p(star(5, 8.2, 3.4)),
    star6: p(star(6, 8, 4.4)),
    star7: p(star(7, 8, 4.2)),
    badge8: p(star(8, 8.2, 5.6)) + label('8'),
    badge10: p(star(10, 8.2, 5.6)) + label('10'),
    badge12: p(star(12, 8.2, 5.8)) + label('12'),
    badge16: p(star(14, 8.4, 5.8)) + label('16'),
    badge24: p(star(16, 8.4, 5.8)) + label('24'),
    badge32: p(star(18, 8.4, 6)) + label('32'),
    ribbonUp: RIBBON,
    ribbonDown: flipY(RIBBON),
    curvedUp: CURVED_RIBBON,
    curvedDown: flipY(CURVED_RIBBON),
    scrollV: p('M3.500 3q0-2.500 2.500-2.500h8q1.500 0 1.500 2t-2 2v9q0 2-2 2H2q-1.500 0-1.500-2t3-2z') + n('M12 .5q1.500 0 1.500 2v2M3.500 13.500q1.500 0 1 2'),
    scrollH: p('M.5 5q0-2 2-2H13V1.500q0-1 1-1t1.500 2V11q0 2-2 2H3v1.500q0 1-1 1t-1.500-2z') + n('M.5 5q0 2 2 2t0-4M13 3h2.500'),
    wave: p('M.5 3C5 0 10 6 15.500 3v10C10 16 5 10 .5 13z'),
    dblWave: p('M.5 3c2.500 2 4.500 0 7.500 0s5 2 7.500 0v10c-2.500 2-5 0-7.500 0s-5 2-7.500 0z')
};
S.udArrow = rot(90, S.lrArrow);

const SECTIONS = [
    ['最近使用した図形', ['textH', 'textV', 'line', 'arrowLine', 'rect', 'oval', 'round', 'tri', 'elbow', 'elbowArrow', 'rArrow', 'dArrow',
        'freeform', 'scribble', 'arc', 'curve', 'lbrace', 'rbrace']],
    ['線', ['line', 'arrowLine', 'dblLine', 'elbow', 'elbowArrow', 'elbowDbl', 'curveConn', 'curveConnArrow', 'curveConnDbl', 'curve', 'freeform', 'scribble']],
    ['四角形', ['rect', 'round', 'snip1', 'snip2', 'snipDiag', 'snipRound', 'round1', 'round2', 'roundDiag']],
    ['基本図形', ['textH', 'textV', 'oval', 'tri', 'rtri', 'para', 'trap', 'diamond', 'pentagon', 'hexagon', 'hept', 'oct',
        'dec', 'dodec', 'pie', 'chord', 'teardrop', 'frame', 'halfFrame', 'ell', 'diag', 'plus', 'plaque', 'can',
        'cube', 'bevel', 'donut', 'noSym', 'blockArc', 'folded', 'smiley', 'heart', 'bolt', 'sun', 'moon', 'cloud',
        'arc', 'bracketPair', 'bracePair', 'lbracket', 'rbracket', 'lbrace', 'rbrace']],
    ['ブロック矢印', ['rArrow', 'lArrow', 'uArrow', 'dArrow', 'lrArrow', 'udArrow', 'quad', 'lru', 'bent', 'uturn', 'leftUp', 'bentUp',
        'curvedR', 'curvedL', 'curvedU', 'curvedD', 'striped', 'notched', 'home', 'chevron', 'calloutR', 'calloutD', 'calloutL', 'calloutU',
        'fatCross', 'quadCall', 'circArrow']],
    ['数式図形', ['mPlus', 'mMinus', 'mTimes', 'mDiv', 'mEq', 'mNeq']],
    ['フローチャート', ['rect', 'round', 'fDecision', 'fData', 'fPredef', 'fInternal', 'fDoc', 'fMulti', 'fTerm', 'fPrep', 'fManual', 'fManOp',
        'fConn', 'fOffpage', 'fCard', 'fTape', 'fSum', 'fOr', 'fCollate', 'fSort', 'fExtract', 'fMerge', 'fStored', 'fDelay',
        'fSeq', 'fDisk', 'fDrum', 'fDisplay']],
    ['星とリボン', ['expl1', 'expl2', 'star4', 'star5', 'star6', 'star7', 'badge8', 'badge10', 'badge12', 'badge16', 'badge24', 'badge32',
        'ribbonUp', 'ribbonDown', 'curvedUp', 'curvedDown', 'scrollV', 'scrollH', 'wave', 'dblWave']],
    ['吹き出し', []]
];

const list = document.getElementById('shapes-list');
SECTIONS.forEach(([title, names]) => {
    const icons = names.map((k) => `<svg class="shape" viewBox="0 0 16 16">${S[k]}</svg>`).join('');
    list.insertAdjacentHTML('beforeend',
        `<section class="shape-section"><h4>${title}</h4><div class="shape-grid">${icons}</div></section>`);
});

// thumbnails: text in them is too small to read, so it's just rows of lines
function lines(x, y, w, count, step, col = '#888') {
    let s = '';
    for (let i = 0; i < count; i++) {
        const width = i % 6 === 5 ? w * 0.65 : w;
        s += `<rect x="${x}" y="${(y + i * step).toFixed(1)}" width="${width}" height=".8" fill="${col}" opacity=".5"/>`;
    }
    return s;
}

const box = (x, y, w, h, col) => `<rect x="${x}" y="${y}" width="${w}" height="${h}" fill="${col}"/>`;
const head = box(5, 5.3, 103, 0.9, '#f08a3c') + box(6, 8, 44, 1.4, '#aaa');

const dotsRow = box(10, 1, 20, 1, '#bbb') + box(40, 1, 45, 1, '#999') + [60, 64, 73, 84].map((x) => `<circle cx="${x}" cy="1.500" r="1.300" fill="#222"/>`).join('');
const middle = (dy) => box(6, dy, 18, 1, '#888') + box(10, dy + 3, 40, .8, '#bbb') +
    box(57, dy - 3, 8, 3, '#e0a9b5') + box(63, dy - 3, 10, 3, '#a9d18e') + box(72, dy - 3, 10, 3, '#9dc3e6') +
    box(59, dy + 5, 18, 4, '#b49ae8') + box(73, dy + 11, 12, 1, '#555');
const cluster = (dy) => box(6, dy, 28, .8, '#aaa') + box(6, dy + 2, 28, .8, '#aaa') +
    box(62, dy - 4, 10, 4, '#ddd') + box(66, dy + 2, 6, 5, '#a8e0f5') + box(54, dy + 6, 7, 2, '#e8c04a') + box(72, dy + 8, 8, 2, '#6fc0d8') + box(64, dy + 8, 6, 3, '#ddd');
const textSlide = (redTop, redBottom) => head +
    box(6, 16, 44, 1.2, '#888') + box(10, 19, 24, .8, '#aaa') +
    lines(6, 26, 77, 7, 2, redTop ? '#e23b3b' : '#777') +
    lines(6, 42, 77, 8, 2, redBottom ? '#f06a6a' : '#777') +
    box(86, 28, 24, 20, '#e8eef2') + box(96, 33, 12, 3, '#7fc4c4') + box(88, 30, 7, 15, '#c8d0d8') + box(103, 38, 6, 8, '#b8c4dc');
const drawn = head + box(6, 16, 2, 2, '#ed7d31') + box(9, 16, 30, 1, '#888') +
    '<g transform="scale(.1155)" fill="none" stroke="#000" stroke-width="10"><path d="M148 393L293 341L319 457L191 328L198 461z"/><path d="M390 308H538V344H482V483H446V344H390z"/></g>' +
    '<path d="M73 64C76 38 80 38 84 52 88 38 96 36 97 62" fill="none" stroke="#333" stroke-width=".8"/>';

const THUMBS = [
    ['', dotsRow + box(0, 0, 114, 1, '#ddd')],
    ['23', head + middle(33)],
    ['24', head + cluster(52)],
    ['25', head + `<g transform="translate(0 14)">${dotsRow}</g>` + middle(31) + cluster(50) + box(92, 17, 1.5, 47, '#ccc')],
    ['26', textSlide(false, false)],
    ['27', textSlide(true, false)],
    ['28', textSlide(false, true)],
    ['29', drawn]
];

const panel = document.getElementById('slide-panel');
THUMBS.forEach(([no, inner], i) => {
    const cls = i === 0 ? ' first' : i === THUMBS.length - 1 ? ' current' : '';
    panel.insertAdjacentHTML('beforeend',
        `<div class="thumb-row${cls}"><span class="thumb-no">${no}</span><div class="thumb"><svg width="114" height="64" viewBox="0 0 114 64">${inner}</svg></div></div>`);
});
```
